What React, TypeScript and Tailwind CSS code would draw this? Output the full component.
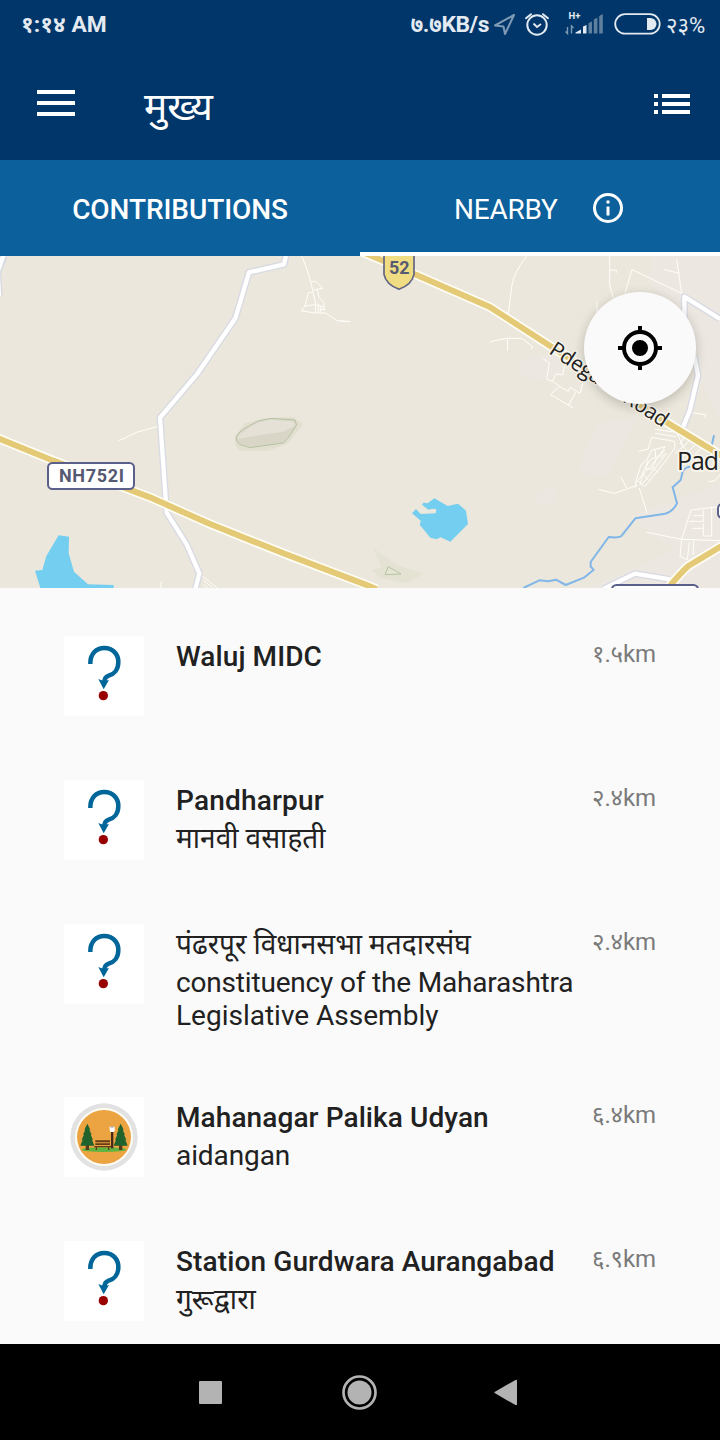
import React from "react";

const FONT = "font-['Roboto','Noto_Sans','Noto_Sans_Devanagari',sans-serif]";

type Place = {
  title: string;
  titleClass: string;
  lines: { text: string; className: string }[];
  distance: string;
  icon: "unknown" | "park";
};

const places: Place[] = [
  { title: "Waluj MIDC", titleClass: "font-medium tracking-[0.1px]", lines: [], distance: "१.५km", icon: "unknown" },
  {
    title: "Pandharpur",
    titleClass: "font-medium tracking-[0.18px]",
    lines: [{ text: "मानवी वसाहती", className: "tracking-[0.06px]" }],
    distance: "२.४km",
    icon: "unknown",
  },
  {
    title: "पंढरपूर विधानसभा मतदारसंघ",
    titleClass: "font-normal",
    lines: [
      { text: "constituency of the Maharashtra", className: "tracking-[-0.18px]" },
      { text: "Legislative Assembly", className: "" },
    ],
    distance: "२.४km",
    icon: "unknown",
  },
  {
    title: "Mahanagar Palika Udyan",
    titleClass: "font-medium tracking-[0.09px]",
    lines: [{ text: "aidangan", className: "tracking-[-0.1px]" }],
    distance: "६.४km",
    icon: "park",
  },
  {
    title: "Station Gurdwara Aurangabad",
    titleClass: "font-medium tracking-[0.12px]",
    lines: [{ text: "गुरूद्वारा", className: "tracking-[0.1px]" }],
    distance: "६.९km",
    icon: "unknown",
  },
];

function UnknownIcon() {
  return (
    <svg viewBox="0 0 240 240" className="size-20">
      <path d="M79 84 C78 54 96 36 121 36 C147 36 163 55 163 78 C163 101 150 115 134 119 C125 122 122 126 121 136" fill="none" stroke="#006699" strokeWidth="13.5" />
      <path d="M103 129 Q119 137 135 132 L119 160 Z" fill="#006699" />
      <circle cx="118" cy="179" r="14" fill="#990000" />
    </svg>
  );
}

function ParkIcon() {
  return (
    <svg viewBox="0 0 240 240" className="size-20">
      <circle cx="120" cy="120" r="101" fill="#e2e2e2" />
      <circle cx="120" cy="120" r="87" fill="#fffdf5" />
      <circle cx="120" cy="120" r="81" fill="#eca341" />
      <ellipse cx="120" cy="158" rx="67" ry="7" fill="#5fb440" />
      <path d="M65 143h10v16h-10zM165 143h10v16h-10z" fill="#5b3a1c" />
      <path d="M70 80L79 98L76 98L83 113L80 113L87 128L84 128L91 146H49L56 128L53 128L60 113L57 113L64 98L61 98Z" fill="#21632d" />
      <path d="M170 80L179 98L176 98L183 113L180 113L187 128L184 128L191 146H149L156 128L153 128L160 113L157 113L164 98L161 98Z" fill="#21632d" />
      <path d="M141 103h7v51h-7z" fill="#472a1a" />
      <path d="M137 91l3-3h9l3 3v10l-3 4h-9l-3-4z" fill="#fff" />
      <path d="M138 91q6-5 13 0z" fill="#4b3622" />
      <path d="M94 130h44v6H94zM94 139h44v5H94zM91 147h50v4H91zM95 151h4v8h-4zM132 151h4v8h-4z" fill="#663c17" />
    </svg>
  );
}

function StatusBar() {
  return (
    <div className="flex h-12 items-center justify-between bg-[#003669] pl-[21px] pr-[15px] text-[#e3eaf1]">
      <span className="mt-[2px] text-[22.8px] font-bold leading-7">१:१४ AM</span>
      <div className="flex items-center">
        <span className="mt-[2px] whitespace-nowrap text-[22.8px] font-bold leading-7 tracking-[-0.4px]">७.७KB/s</span>
        <svg viewBox="0 0 122 48" className="ml-[3px] h-12 w-[122px] shrink-0" fill="none">
          <path d="M22 15 L3 25.5 L11.5 26.5 L13 34 Z" stroke="#7f9ab4" strokeWidth="2" strokeLinejoin="round" />
          <circle cx="45" cy="25" r="9.7" stroke="#e3eaf1" strokeWidth="2" />
          <path d="M34 18.2 L39 14.2 M56 18.2 L51 14.2" stroke="#e3eaf1" strokeWidth="2" strokeLinecap="round" />
          <path d="M41.5 23.5 L45 27 L49 24" stroke="#e3eaf1" strokeWidth="1.8" />
          <path d="M75.500 27v6.500l-2-2M79.500 33.500V26l2 2" stroke="#7f9ab4" strokeWidth="1.4" />
          <path d="M83.500 33.500V32.500L89 29.500v4zM91 26.500l3.500-1.500v8.500H91z" fill="#e3eaf1" />
          <path d="M96.500 23l3.500-1.500v12H96.500zM101.800 19.500l3.600-2v16h-3.600zM107.200 16l3.600-2v19.500h-3.600z" fill="#5f7f9f" />
          <text x="76.500" y="19" className="font-bold" fontSize="9.500" fill="#e3eaf1">H+</text>
        </svg>
        <svg viewBox="0 0 47 22" className="h-[22px] w-[47px] shrink-0" fill="none">
          <rect x="1.200" y="1.200" width="44.500" height="19.500" rx="9.750" stroke="#e3eaf1" strokeWidth="1.800" />
          <path d="M33 5h3.500a6 6 0 0 1 0 12H33z" fill="#e3eaf1" />
        </svg>
        <span className="ml-[5px] mt-[1px] w-[39px] whitespace-nowrap text-[22.2px] leading-7">२३%</span>
      </div>
    </div>
  );
}

function MapView() {
  return (
    <div className="relative h-[332px] overflow-hidden bg-[#ebe7dc]">
      <svg viewBox="0 0 720 332" className="h-[332px] w-full" fill="none" strokeLinejoin="round">
        <g transform="translate(340 -6) scale(.3333333)">
          <path d="M930 0H1140V520L1080 380L1030 200L930 100ZM540 330L640 310L680 370L590 390L540 370ZM770 520L890 500L810 680L710 670ZM580 740L650 705V750L600 770ZM870 800L1140 700V1020H740L1000 900Z" fill="#ece7e0" />
          <path d="M100 895L170 945L250 971L200 998L120 985L98 960L125 950Z" fill="#e4e2d2" />
          <path d="M145 950L183 972L135 974Z" fill="#e4e5d2" stroke="#b4c5a0" strokeWidth="3" />
          <g stroke="#fffefa" strokeWidth="3">
            <path d="M560 18Q520 70 515 110L505 192M450 275L500 265H545L578 290L573 298M503 266V302M610 327L628 338L620 388L637 394L659 409L632 434L698 473M637 394L648 372L668 375L673 350M659 409L685 424L690 412L720 430L728 400M708 426L686 465M809 18V104L820 143M809 60L830 61L828 69M855 130L876 59L1025 130M1010 28L1025 130M970 58L1019 70M771 155V200M0 213L30 215" />
            <path d="M1055 488L1097 494L1095 504M945 538L1017 548M945 550L1008 560M935 562L985 571M935 562L925 597L895 605M975 590L935 601L920 630L903 645L890 685L885 712M975 590L960 615L930 630L912 660L900 705M985 570L1004 575L1005 594L975 635L914 710M945 600L948 630L935 658L916 656L923 634M960 625L975 610M775 718L823 730L892 706M842 680L860 714M898 714L921 790M1010 548L1030 590L1005 610M1040 550L1020 580L1060 620M1060 560L1030 590M1080 570L1045 605M1100 580L1065 612M920 847L1025 868L1140 872M1053 780L1025 868L1020 920L1042 929L1048 875M1053 780L1140 770M1047 814H1090V780M1060 797H1090M1058 835H1090M1090 820V858H1115V770M1060 868V915M1105 695L1125 692L1140 675" />
            <path d="M975 600L885 700M980 610L905 705M890 690L912 708M905 670L925 690M935 650L955 668" />
          </g>
          <path d="M790 1017L885 971L990 988M1033 215V140L1140 207M1063 320L1074 376L1050 480L1030 530" stroke="#d8dae3" strokeWidth="21" />
          <path d="M790 1017L885 971L990 988M1033 215V140L1140 207M1063 320L1074 376L1050 480L1030 530" stroke="#fff" strokeWidth="13" />
          <path d="M1122 556L1115 588L1105 625M1055 650Q1034 650 1028 665L1022 690L998 712L1011 760Q998 786 975 791L886 805L845 857Q838 865 806 861L752 936V950L761 959L732 983L677 1005L648 989L625 994L598 991L550 1014" stroke="#80b6e8" strokeWidth="6" />
          <path d="M216 790L228 777L242 792L287 790L289 778L278 776L265 779L246 764L250 758L263 760L283 745L323 768L354 761L378 782L384 822L331 875L302 862L290 868L271 863L239 824L243 813Z" fill="#74cef0" />
        </g>
        <g transform="translate(0 -6) scale(.3333333)">
          <path d="M705 560L735 520L790 505L880 500L909 523L865 580L805 602H720L705 585Z" fill="#e2dfd0" />
          <path d="M709 560Q714 542 775 513L813 505L885 510L890 525L865 563L850 579L750 593L718 583L709 570Z" fill="#d9d6c8" stroke="#b6c3a2" strokeWidth="3" />
          <path d="M714 560Q730 540 776 517L810 509L880 514L884 528L850 545L780 555L712 567Z" fill="#e5e1d7" />
          <path d="M905 18L920 55L934 103L946 156L947 188M934 95L947 94L968 115L941 120M952 120L957 142L972 158V182M937 126L925 129L915 168L904 183L946 189H976L1012 212L1050 215M915 168L946 164L970 170M955 160V188M961 170V187M963 178H974M355 573L410 547L475 529M483 995V1016M603 975L652 1014M610 990L638 1014M610 1004L624 1014" stroke="#fffefa" strokeWidth="3" />
          <path d="M858 18L852 43L747 67L706 205L593 370L480 503L500 788L560 883L598 970L586 1018M13 18L-7 65L-3 138" stroke="#d8dae3" strokeWidth="21" />
          <path d="M858 18L852 43L747 67L706 205L593 370L480 503L500 788L560 883L598 970L586 1018M12 12L-7 65L-3 138" stroke="#fff" strokeWidth="13" />
          <path d="M105 962L127 960L139 918L176 856L207 860L206 910L222 965L264 1003L341 1005V1020H123Z" fill="#74cef0" />
          <path d="M-10 563L160 632L450 742L625 820L850 910L1095 1003L1130 1018" stroke="#fffef6" strokeWidth="28" />
          <path d="M-10 563L160 632L450 742L625 820L850 910L1095 1003L1130 1018" stroke="#e4ca76" strokeWidth="18" />
        </g>
        <g transform="translate(340 -6) scale(.3333333)">
          <path d="M65 5L230 75L448 170L640 294L980 517L1150 620M980 1020Q1020 970 1045 948L1150 885" stroke="#fffef6" strokeWidth="28" />
          <path d="M65 5L230 75L448 170L640 294L980 517L1150 620M980 1020Q1020 970 1045 948L1150 885" stroke="#e4ca76" strokeWidth="18" />
          <path d="M132 10V73Q138 103 177 118Q216 103 222 73V10Z" fill="#f0dc83" stroke="#616583" strokeWidth="5" />
        </g>
        <text x="389" y="18" fontSize="18" textLength="20.500" className="font-bold" fill="#555971">52</text>
        <rect x="48" y="207" width="86" height="26" rx="4.500" fill="#fff" stroke="#5b608a" strokeWidth="2" />
        <text x="59" y="226" fontSize="18" textLength="65" className="font-bold" fill="#555971">NH752I</text>
        <rect x="612" y="329" width="86" height="26" rx="4.500" fill="#fff" stroke="#5b608a" strokeWidth="2" />
        <rect x="718" y="248" width="40" height="14" rx="4.500" fill="#fff" stroke="#5b608a" strokeWidth="2" />
        <path id="road-label" d="M548 97L668 175" />
        <text fontSize="21" fill="#222" stroke="#f6f4ea" strokeWidth="3" paintOrder="stroke" className="font-['Open_Sans','Noto_Sans',sans-serif] font-medium">
          <textPath href="#road-label" textLength="137">Pdegaon Road</textPath>
        </text>
        <text x="677" y="214" fontSize="25" textLength="42" fill="#1f1f1f" stroke="#f6f4ea" strokeWidth="4" paintOrder="stroke" className="font-['Open_Sans','Noto_Sans',sans-serif]">Pad</text>
      </svg>
      <button className="absolute right-6 top-9 flex size-28 items-center justify-center rounded-full bg-[#fafafa] shadow-[0_3px_12px_rgba(0,0,0,0.2)]">
        <svg viewBox="0 0 24 24" className="size-12" fill="#000">
          <path d="M12 8a4 4 0 1 0 0 8 4 4 0 0 0 0-8zm8.940 3A8.994 8.994 0 0 0 13 3.060V1h-2v2.060A8.994 8.994 0 0 0 3.060 11H1v2h2.060A8.994 8.994 0 0 0 11 20.940V23h2v-2.060A8.994 8.994 0 0 0 20.940 13H23v-2h-2.060zM12 19a7 7 0 1 1 0-14 7 7 0 0 1 0 14z" />
        </svg>
      </button>
    </div>
  );
}

export default function App() {
  return (
    <div className={`flex h-[1440px] w-[720px] flex-col overflow-hidden bg-[#fafafa] ${FONT}`}>
      <StatusBar />
      <header className="flex h-28 items-center bg-[#003669] pl-[37px] pr-[30px] text-white">
        <div className="mb-[3px] flex w-[38px] flex-col gap-[7px]">
          <span className="h-1 bg-white" />
          <span className="h-1 bg-white" />
          <span className="h-1 bg-white" />
        </div>
        <h1 className="ml-[69px] mt-[5px] grow text-[39px] font-normal leading-[56px]">मुख्य</h1>
        <svg viewBox="0 0 36 20" className="h-5 w-9" fill="#fff">
          <path d="M0 0h4v4H0zM8 0h28v4H8zM0 8h4v4H0zM8 8h28v4H8zM0 16h4v4H0zM8 16h28v4H8z" />
        </svg>
      </header>
      <nav className="grid h-24 grid-cols-2 bg-[#0c609c] text-[28px] text-white">
        <div className="flex items-center justify-center pt-[3px] font-medium tracking-[-0.08px]">CONTRIBUTIONS</div>
        <div className="flex items-center border-b-4 border-white pl-[94px] pt-1">
          <span className="mt-[3px] w-[139px] tracking-[-0.2px]">NEARBY</span>
          <svg viewBox="0 0 30 30" className="size-[30px]" fill="none">
            <circle cx="15" cy="15" r="13.500" stroke="#fff" strokeWidth="3" />
            <path d="M13.500 7.500h3v3h-3zM13.500 13.500h3v9h-3z" fill="#fff" />
          </svg>
        </div>
      </nav>
      <MapView />
      <main className="flex h-[756px] flex-col overflow-hidden pt-4">
        {places.map((p) => (
          <article key={p.title} className="flex min-h-36 shrink-0 px-16 py-8">
            <div className="size-20 shrink-0 bg-white">{p.icon === "park" ? <ParkIcon /> : <UnknownIcon />}</div>
            <div className="ml-8 grow whitespace-nowrap pb-px pt-1 text-[28px] leading-[33px] text-[#212121]">
              <h2 className={`mb-[5px] h-[33px] ${p.titleClass}`}>{p.title}</h2>
              {p.lines.map((l) => (
                <p key={l.text} className={`h-[33px] ${l.className}`}>{l.text}</p>
              ))}
            </div>
            <span className="h-[33px] pt-1 text-[24px] leading-7 tracking-[-0.1px] text-[#7a7a7a]">{p.distance}</span>
          </article>
        ))}
      </main>
      <footer className="flex h-24 shrink-0 items-center bg-black pl-[198px]">
        <svg viewBox="0 0 320 36" className="h-9 w-80">
          <rect x="1" y="7" width="23" height="23" rx="1" fill="#b3b3b3" />
          <circle cx="161.500" cy="18.500" r="16" fill="none" stroke="#b3b3b3" strokeWidth="2.700" />
          <circle cx="161.500" cy="18.500" r="12" fill="#b3b3b3" />
          <path d="M297.500 18.500L318 6.800V30.200Z" fill="#b3b3b3" stroke="#b3b3b3" strokeWidth="2" strokeLinejoin="round" />
        </svg>
      </footer>
    </div>
  );
}
